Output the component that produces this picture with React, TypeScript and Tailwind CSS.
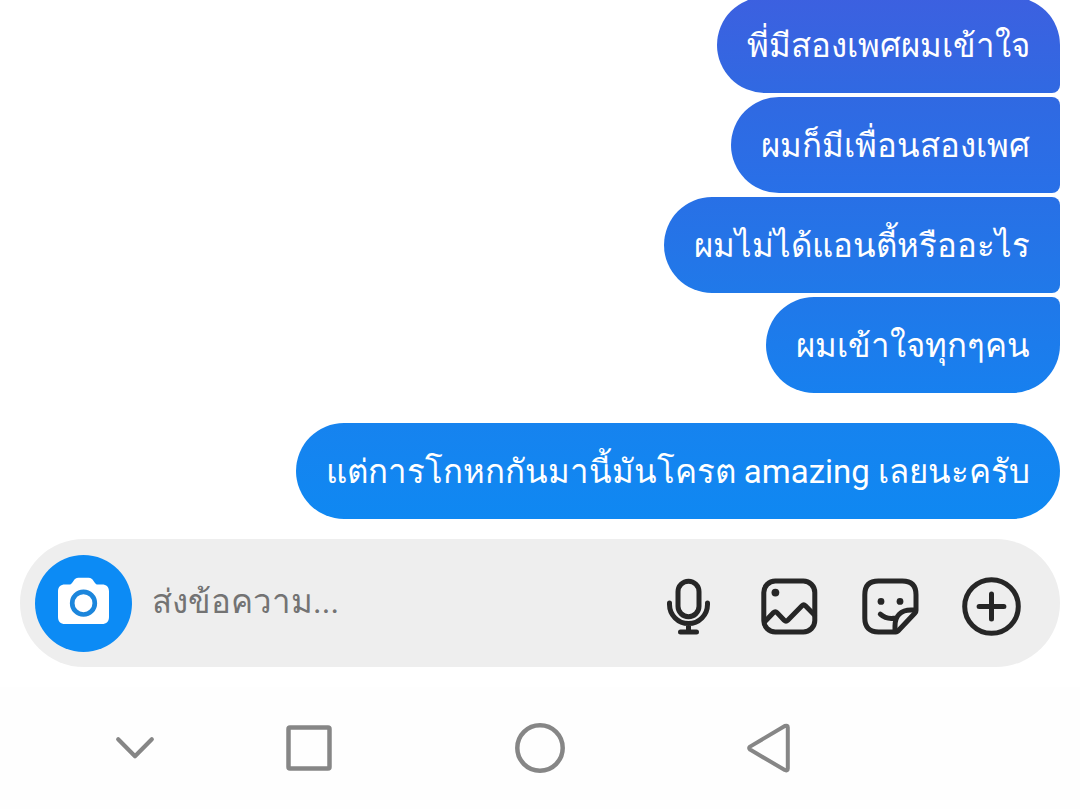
import type { ReactNode } from "react";

type Message = { text: string; shape: string };

const messages: Message[] = [
  {
    text: "พี่มีสองเพศผมเข้าใจ",
    shape: "rounded-[48px] rounded-br-lg from-[#3c60e0] to-[#3069e2]",
  },
  {
    text: "ผมก็มีเพื่อนสองเพศ",
    shape: "mt-1 rounded-l-[48px] rounded-r-lg from-[#3069e2] to-[#2870e8]",
  },
  {
    text: "ผมไม่ได้แอนตี้หรืออะไร",
    shape: "mt-1 rounded-l-[48px] rounded-r-lg from-[#2870e6] to-[#2079e9]",
  },
  {
    text: "ผมเข้าใจทุกๆคน",
    shape: "mt-1 rounded-[48px] rounded-tr-lg from-[#2078e9] to-[#1780ef]",
  },
  {
    text: "แต่การโกหกกันมานี้มันโครต amazing เลยนะครับ",
    shape: "mt-[30px] rounded-[48px] from-[#1683ef] to-[#0f88f2]",
  },
];

function IconButton({ label, children }: { label: string; children: ReactNode }) {
  return (
    <button type="button" aria-label={label} className="shrink-0">
      <svg
        viewBox="0 0 60 60"
        className="size-[60px]"
        fill="none"
        stroke="currentColor"
        strokeWidth="5"
        strokeLinecap="round"
        strokeLinejoin="round"
      >
        {children}
      </svg>
    </button>
  );
}

function Composer() {
  return (
    <form
      className="mx-5 mt-5 flex h-32 items-center rounded-full bg-[#eeeeee] pr-[39px] pl-[15px] text-[#262626]"
      onSubmit={(e) => e.preventDefault()}
    >
      <button
        type="button"
        aria-label="กล้อง"
        className="flex size-[97px] shrink-0 items-center justify-center rounded-full bg-[#0c8bf5]"
      >
        <svg viewBox="0.5 -0.6 60 60" className="size-[60px]" fill="none">
          <path
            fill="#fff"
            d="M11.5 11H15.5C17.5 11 18.3 9.8 19.6 7.9C21.2 5.4 22.3 4.2 25 4.2H35C37.7 4.2 38.8 5.4 40.4 7.9C41.7 9.8 42.5 11 44.5 11H48.5C53 11 55.5 13.5 55.5 18V43.5C55.5 48 53 50.5 48.5 50.5H11.5C7 50.5 4.5 48 4.5 43.5V18C4.5 13.5 7 11 11.5 11Z"
          />
          <circle cx="30" cy="29.6" r="11.3" stroke="#1c86dc" strokeWidth="4.7" />
        </svg>
      </button>
      <input
        type="text"
        aria-label="ส่งข้อความ"
        placeholder="ส่งข้อความ..."
        className="ml-5 h-16 min-w-0 flex-1 bg-transparent pb-1 outline-none placeholder:text-[#737373]"
      />
      <div className="flex gap-[41px] pt-[6px]">
        <IconButton label="ข้อความเสียง">
          <rect x="20" y="5.2" width="21" height="35.5" rx="10.5" />
          <path d="M11.5 27v1.5a19 19 0 0 0 38 0V27M30.5 48v8M22.5 56h16" />
        </IconButton>
        <IconButton label="รูปภาพ">
          <rect x="4.8" y="5" width="51" height="51" rx="11.5" />
          <circle cx="16.4" cy="16.6" r="3.9" fill="currentColor" stroke="none" />
          <path d="M5.5 46L14.6 36.6Q16.3 34.8 18 36.6L25.2 44.2Q27 46 28.8 44.2L43 29.8Q44.7 28.1 46.4 29.8L55.5 39" />
        </IconButton>
        <IconButton label="สติกเกอร์">
          <path d="M36 56H18.5C9.5 56 4.8 51.3 4.8 42.3V18.7C4.8 9.7 9.5 5 18.5 5H42.3C51.3 5 56 9.7 56 18.7V34.5Q56 36 55 37L38 55Q37 56 36 56Z" />
          <path d="M35 55.5V50C35 40 41 34 51 34H55.5M20.3 38.2C24.5 42 29.5 43.3 35.8 42" />
          <circle cx="21" cy="25.4" r="3.4" fill="currentColor" stroke="none" />
          <circle cx="40" cy="25.4" r="3.4" fill="currentColor" stroke="none" />
        </IconButton>
        <IconButton label="เพิ่มเติม">
          <circle cx="30.5" cy="30.5" r="26.8" />
          <path d="M30.5 18.1v24.8M18.1 30.5h24.8" />
        </IconButton>
      </div>
    </form>
  );
}

function NavButton({ label, children }: { label: string; children: ReactNode }) {
  return (
    <button type="button" aria-label={label} className="justify-self-center">
      <svg
        viewBox="0 0 60 60"
        className="size-[60px]"
        fill="none"
        stroke="currentColor"
        strokeWidth="4.5"
        strokeLinecap="round"
        strokeLinejoin="round"
      >
        {children}
      </svg>
    </button>
  );
}

export default function App() {
  return (
    <main
      lang="th"
      className="flex min-h-screen flex-col overflow-hidden bg-white font-['Roboto','Noto_Sans',sans-serif] text-[33px]"
    >
      <ul className="-mt-[3px] flex flex-col items-end px-5 text-white">
        {messages.map((m) => (
          <li
            key={m.text}
            className={`flex min-h-24 items-center bg-linear-to-b px-[30px] pt-[2px] leading-[48px] ${m.shape}`}
          >
            {m.text}
          </li>
        ))}
      </ul>
      <Composer />
      <nav
        aria-label="ระบบ"
        className="mt-5 grid flex-1 grid-cols-[270fr_78fr_384fr_74fr_274fr] content-center bg-[#fefefe] text-[#868686]"
      >
        <NavButton label="ซ่อนแป้นพิมพ์">
          <path d="M13.2 21.2L30 38.3L46.8 21.2" strokeWidth="4.2" />
        </NavButton>
        <NavButton label="แอปล่าสุด">
          <rect x="9.5" y="9.5" width="41" height="41" rx="1.5" />
        </NavButton>
        <NavButton label="หน้าหลัก">
          <circle cx="30" cy="30" r="22.7" />
        </NavButton>
        <NavButton label="ย้อนกลับ">
          <path
            d="M11 28.6L45.8 8Q48.8 6.9 48.8 9.6V50.6Q48.8 53.3 45.8 52L11 31.6Q9.2 30.1 11 28.6Z"
            strokeWidth="4"
          />
        </NavButton>
      </nav>
    </main>
  );
}
